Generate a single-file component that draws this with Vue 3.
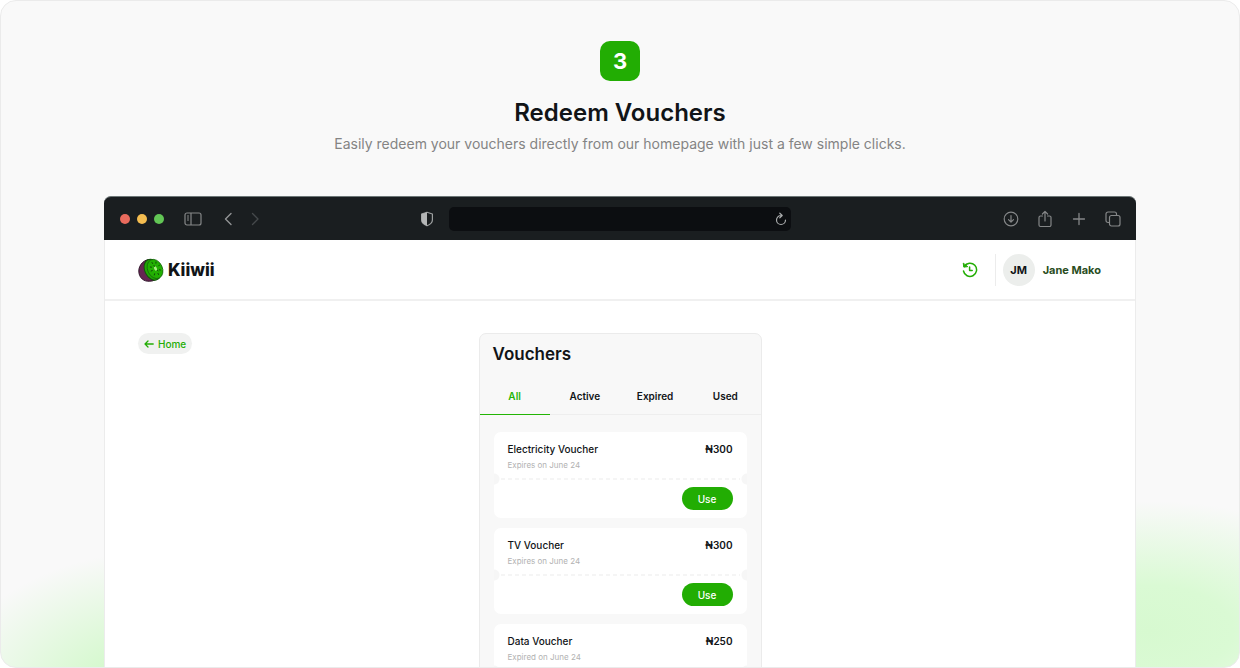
<script setup>
import { ref } from 'vue'

const tabs = ['All', 'Active', 'Expired', 'Used']
const active = ref('All')

const vouchers = [
  { name: 'Electricity Voucher', note: 'Expires on June 24', amount: '₦300', usable: true },
  { name: 'TV Voucher', note: 'Expires on June 24', amount: '₦300', usable: true },
  { name: 'Data Voucher', note: 'Expired on June 24', amount: '₦250', usable: false }
]
</script>

<template>
  <section class="step">
    <header class="intro">
      <span class="number">3</span>
      <h2>Redeem Vouchers</h2>
      <p>Easily redeem your vouchers directly from our homepage with just a few simple clicks.</p>
    </header>

    <div class="browser">
      <div class="toolbar">
        <div class="side">
          <span class="dots"><i class="red"></i><i class="yellow"></i><i class="green"></i></span>
          <svg class="sidebar-icon" width="18" height="14" viewBox="0 0 18 14" fill="none" stroke="#858788" stroke-width="1.2">
            <rect x="1" y="1" width="16" height="12" rx="2" />
            <path d="M7 1v12M3 4h2M3 6h2M3 8h2" />
          </svg>
          <svg class="back-icon" width="8" height="14" viewBox="0 0 8 14" fill="none" stroke="#929495" stroke-width="1.4" stroke-linecap="round" stroke-linejoin="round"><path d="M7 1.500L1.500 7 7 12.500" /></svg>
          <svg class="next-icon" width="8" height="14" viewBox="0 0 8 14" fill="none" stroke="#45494b" stroke-width="1.3" stroke-linecap="round" stroke-linejoin="round"><path d="M1.500 1.500L7 7l-5.500 5.500" /></svg>
        </div>
        <div class="middle">
          <svg width="14" height="16" viewBox="0 0 14 16" fill="none">
            <path d="M7 1.200L12.400 3v6c0 2.700-2.400 4.600-5.400 5.800C4 13.600 1.600 11.700 1.600 9V3z" stroke="#9da0a0" stroke-width="1.2" stroke-linejoin="round" />
            <path d="M7 1.200v13.600C4 13.600 1.600 11.700 1.600 9V3z" fill="#b5b7b7" />
          </svg>
          <div class="address">
            <svg width="12" height="14" viewBox="0 0 12 14" fill="none" stroke="#aaacad" stroke-width="1.2" stroke-linecap="round" stroke-linejoin="round">
              <path d="M6 3.500a4.500 4.500 0 1 0 4.500 4.500M4.800 1.200L7.200 3.500 4.800 5.800" />
            </svg>
          </div>
        </div>
        <div class="side right">
          <svg width="16" height="16" viewBox="0 0 16 16" fill="none" stroke="#858788" stroke-width="1.2" stroke-linecap="round" stroke-linejoin="round">
            <circle cx="8" cy="8" r="6.800" /><path d="M8 4.500v6.500M5.500 8.600L8 11.100l2.500-2.500" />
          </svg>
          <svg width="16" height="18" viewBox="0 0 16 18" fill="none" stroke="#858788" stroke-width="1.2" stroke-linecap="round" stroke-linejoin="round">
            <path d="M5.500 6H3.500a1.500 1.500 0 0 0-1.500 1.500V15a1.500 1.500 0 0 0 1.500 1.500h9A1.500 1.500 0 0 0 14 15V7.500A1.500 1.500 0 0 0 12.500 6h-2M8 11V1.500M5.400 4L8 1.400 10.600 4" />
          </svg>
          <svg width="16" height="16" viewBox="0 0 16 16" fill="none" stroke="#858788" stroke-width="1.300" stroke-linecap="round"><path d="M8 2.500v11M2.500 8h11" /></svg>
          <svg width="16" height="16" viewBox="0 0 16 16" fill="none" stroke="#858788" stroke-width="1.2" stroke-linejoin="round">
            <rect x="4.500" y="4.500" width="10.500" height="10.500" rx="2" />
            <path d="M4.500 11.500H3a2 2 0 0 1-2-2V3a2 2 0 0 1 2-2h6.500a2 2 0 0 1 2 2v1.500" />
          </svg>
        </div>
      </div>

      <nav class="appbar">
        <a class="brand" href="#">
          <svg width="26" height="24" viewBox="0 0 26 24">
            <path d="M13 1.500C6 1 .8 7 .8 13c0 7 5.200 10.800 11 10.200 4 0 7-2 9-5z" fill="#662552" stroke="#30172c" />
            <ellipse cx="14.500" cy="11.700" rx="7.700" ry="11" transform="rotate(-25 14.500 11.700)" fill="#20a803" stroke="#165210" />
            <ellipse cx="17" cy="11" rx="7.400" ry="10" transform="rotate(-25 17 11)" fill="#22b002" stroke="#17680c" stroke-width=".8" />
            <ellipse cx="17.500" cy="10.500" rx="1.400" ry="2.200" transform="rotate(-25 17.500 10.500)" fill="#a8ee82" />
            <path d="M14 4.500l.6 1M18 4l-.1 1.200M21.500 7l-.8.900M12.300 9l1.200.2M13.200 13l1.100-.5M16.300 17l.3-1.200M20.500 16.500l-.5-1.100M22.500 12l-1.100-.2M16 7.500l.4.800M20 12.800l-.7-.6" stroke="#10480b" stroke-width="1" stroke-linecap="round" />
          </svg>
          <span>Kiiwii</span>
        </a>
        <div class="account">
          <button class="history" type="button" aria-label="History">
            <svg width="16" height="16" viewBox="0 0 16 16" fill="none" stroke="#23ad05" stroke-width="1.500" stroke-linecap="round" stroke-linejoin="round">
              <path d="M2.300 4.500A6.600 6.600 0 1 1 1.500 9" />
              <path d="M1.300 1.500l.5 3.600 3.600-.4z" fill="#23ad05" stroke-width="1" />
              <path d="M7.600 5v3.600h2.600" />
            </svg>
          </button>
          <div class="user"><span class="avatar">JM</span><span>Jane Mako</span></div>
        </div>
      </nav>

      <main class="content">
        <div class="back">
          <a class="home" href="#">
            <svg width="10" height="8" viewBox="0 0 10 8" fill="none" stroke="#23ad05" stroke-width="1.300" stroke-linecap="round" stroke-linejoin="round"><path d="M9.200 4H1M4 1L1 4l3 3" /></svg>
            Home
          </a>
        </div>
        <section class="panel">
          <h3>Vouchers</h3>
          <div class="tabs" role="tablist">
            <button v-for="t in tabs" :key="t" type="button" role="tab" :aria-selected="t === active" :class="{ on: t === active }" @click="active = t">{{ t }}</button>
          </div>
          <ul>
            <li v-for="v in vouchers" :key="v.name">
              <div class="info">
                <div><h4>{{ v.name }}</h4><p>{{ v.note }}</p></div>
                <strong>{{ v.amount }}</strong>
              </div>
              <div class="tear">
                <svg width="100%" height="2"><line x1="0" y1="1" x2="100%" y2="1" stroke="#f5f5f5" stroke-width="2" stroke-dasharray="4 3" /></svg>
              </div>
              <div v-if="v.usable" class="action"><button type="button">Use</button></div>
            </li>
          </ul>
        </section>
      </main>
    </div>
  </section>
</template>

<style>
body {
  background: #fff;
}
</style>

<style scoped>
* {
  box-sizing: border-box;
  margin: 0;
}
svg {
  display: block;
  flex: none;
}
button {
  border: 0;
  background: none;
  padding: 0;
  font: inherit;
  cursor: pointer;
}
a {
  text-decoration: none;
}
.step {
  height: 100vh;
  overflow: hidden;
  display: flex;
  flex-direction: column;
  padding: 40px 103px 0;
  border: 1px solid #ebebeb;
  border-radius: 16px;
  background:
    radial-gradient(ellipse 240px 130px at calc(100% - 90px) 630px, #d7f9d0 0%, #dafad4 35%, rgba(218, 250, 212, 0) 100%),
    radial-gradient(ellipse 220px 150px at 160px 700px, #d2f8ca 0%, #d6f9cf 35%, rgba(218, 250, 212, 0) 100%),
    #f9f9f9;
  font-family: Inter, "Liberation Sans", sans-serif;
  color: #111417;
}
.intro {
  display: flex;
  flex-direction: column;
  align-items: center;
  text-align: center;
}
.number {
  width: 40px;
  height: 40px;
  border-radius: 10px;
  background: #22ad03;
  color: #fff;
  font-size: 22px;
  line-height: 40px;
  font-weight: 700;
}
h2 {
  margin-top: 16px;
  font-size: 24px;
  line-height: 32px;
  font-weight: 600;
}
.intro p {
  margin-top: 5px;
  color: #848484;
  font-size: 14px;
  line-height: 20px;
}
.browser {
  flex: none;
  margin-top: 42px;
  border: solid #ececec;
  border-width: 0 1px;
  border-radius: 7px 7px 0 0;
  background: #fff;
}
.toolbar {
  display: grid;
  grid-template-columns: 300fr 372px 328fr;
  align-items: center;
  height: 44px;
  margin: 0 -1px;
  padding: 0 15px 0 16px;
  border-top: 1px solid #6d7777;
  border-radius: 7px 7px 0 0;
  background: #1a1e20;
}
.side {
  display: flex;
  align-items: center;
}
.dots {
  display: flex;
  gap: 7px;
}
.dots i {
  width: 10px;
  height: 10px;
  border-radius: 50%;
}
.red {
  background: #e96b5d;
}
.yellow {
  background: #f4bd50;
}
.green {
  background: #62c655;
}
.sidebar-icon {
  margin-left: 20px;
}
.back-icon {
  margin-left: 22px;
}
.next-icon {
  margin-left: 19px;
}
.right {
  justify-content: flex-end;
  gap: 18px;
}
.middle {
  display: flex;
  align-items: center;
  gap: 15px;
  margin-right: 1px;
}
.address {
  display: flex;
  flex: 1;
  align-items: center;
  justify-content: flex-end;
  height: 24px;
  padding-right: 4px;
  border-radius: 5px;
  background: #0c0e11;
}
.appbar {
  display: flex;
  justify-content: space-between;
  align-items: center;
  height: 61px;
  padding: 0 34px 0 33px;
  border-bottom: 2px solid #f0f0f0;
}
.brand {
  display: flex;
  align-items: center;
  gap: 4px;
  color: #111417;
  font-size: 17px;
  line-height: 20px;
  font-weight: 800;
}
.account,
.user {
  display: flex;
  align-items: center;
}
.history {
  margin-right: 17px;
}
.user {
  gap: 8px;
  padding-left: 8px;
  border-left: 1px solid #ececec;
  color: #2a4d22;
  font-size: 11px;
  font-weight: 700;
}
.avatar {
  width: 32px;
  height: 32px;
  margin-left: -1px;
  border-radius: 50%;
  background: #eceeec;
  color: #111417;
  line-height: 32px;
  text-align: center;
}
.content {
  display: grid;
  grid-template-columns: 1fr 283px 1fr;
  padding: 32px 33px;
}
.back {
  display: flex;
  align-items: flex-start;
}
.home {
  display: flex;
  align-items: center;
  gap: 4px;
  height: 21px;
  padding: 0 6px;
  border-radius: 11px;
  background: #f0f1f0;
  color: #23ad05;
  font-size: 10px;
  font-weight: 500;
}
.panel {
  border: 1px solid #ebebeb;
  border-radius: 7px;
  background: #f8f8f8;
}
h3 {
  padding: 10px 13px 0;
  font-size: 17px;
  line-height: 20px;
  font-weight: 600;
}
.tabs {
  display: grid;
  grid-template-columns: repeat(4, 1fr);
  margin-top: 13px;
  box-shadow: inset 0 -1px #eeeeee;
}
.tabs button {
  height: 38px;
  color: #111417;
  font-size: 10px;
  font-weight: 600;
}
.tabs .on {
  box-shadow: inset 0 -1px #23b505;
  color: #23b505;
}
ul {
  display: grid;
  gap: 10px;
  padding: 17px 14px;
  list-style: none;
}
li {
  height: 86px;
  border-radius: 7px;
  background: #fff;
}
.info {
  display: flex;
  justify-content: space-between;
  padding: 10px 14px 0;
  height: 41px;
}
h4 {
  font-size: 10px;
  line-height: 14px;
  font-weight: 500;
}
.info p {
  margin-top: 4px;
  color: #b2b2b2;
  font-size: 8px;
  line-height: 10px;
}
.info strong {
  font-size: 10px;
  line-height: 14px;
  font-weight: 600;
}
.tear {
  display: flex;
  align-items: center;
  height: 12px;
  padding: 0 7px;
  background:
    radial-gradient(circle at 0 50%, #f6f6f6 5px, transparent 6px),
    radial-gradient(circle at 100% 50%, #f6f6f6 5px, transparent 6px);
}
.tear svg {
  flex: 1;
  min-width: 0;
}
.action {
  display: flex;
  justify-content: flex-end;
  padding: 2px 14px 0;
}
.action button {
  width: 51px;
  height: 23px;
  border-radius: 12px;
  background: #22ad03;
  color: #fff;
  font-size: 10px;
  font-weight: 500;
}
</style>
